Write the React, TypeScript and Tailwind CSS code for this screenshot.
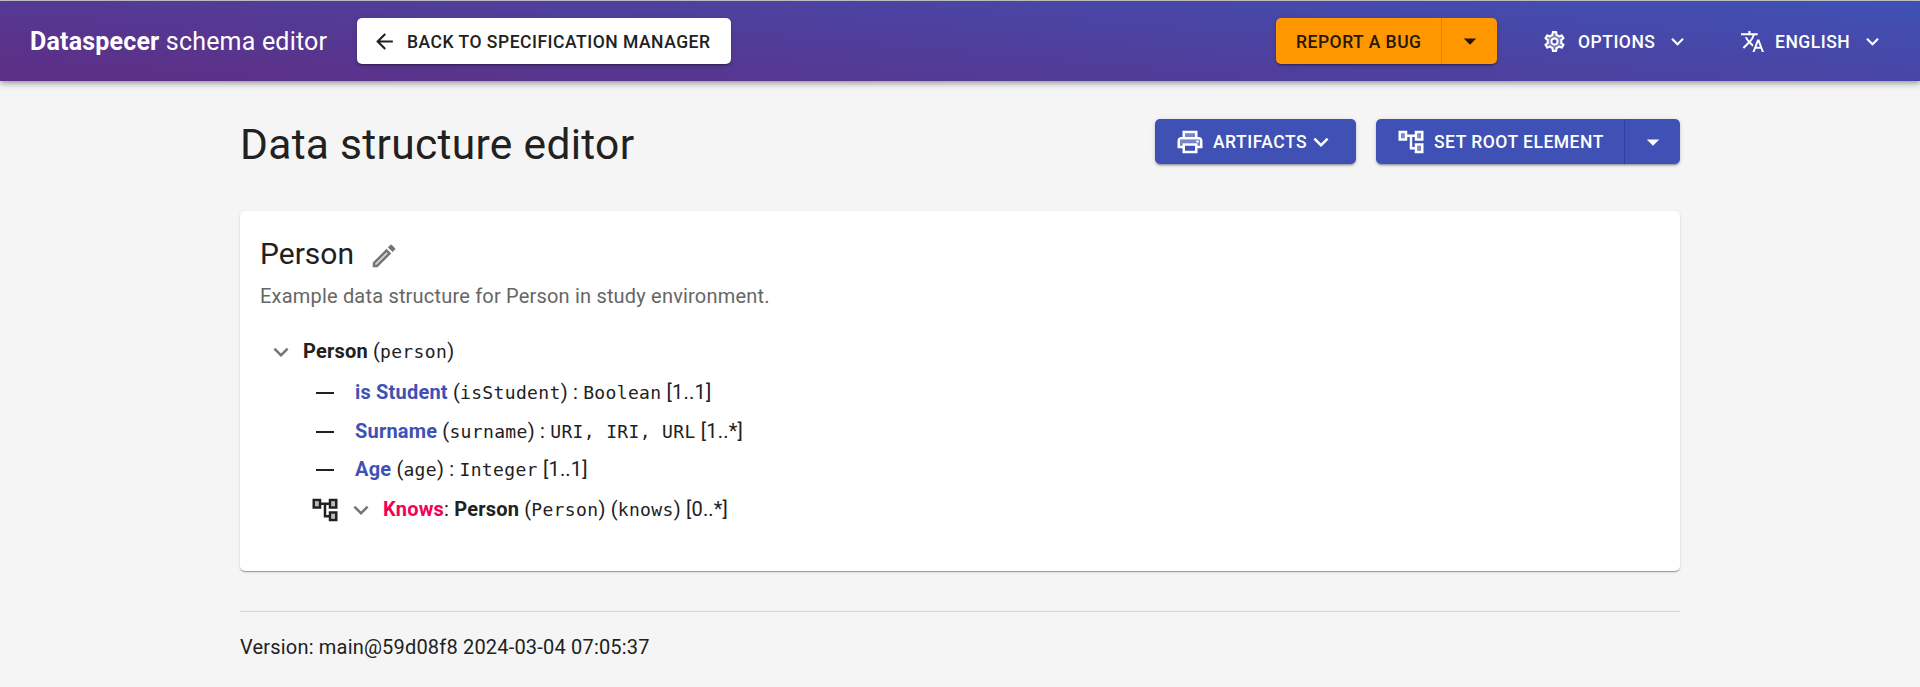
import type { ReactNode } from "react";
import { MdArrowBack, MdArrowDropDown, MdExpandMore, MdOutlineSettings, MdTranslate } from "react-icons/md";

const TREE_FILL = "M7 9H4V5h3v4zm10 6h3v4h-3v-4zm0-10h3v4h-3V5z";

function AccountTree({ className = "" }: { className?: string }) {
  return (
    <svg viewBox="0 0 24 24" fill="currentColor" className={`size-[30px] shrink-0 ${className}`}>
      <path opacity=".3" d={TREE_FILL} />
      <path d="M22 11V3h-7v3H9V3H2v8h7V8h2v10h4v3h7v-8h-7v3h-2V8h2v3h7zM7 9H4V5h3v4zm10 6h3v4h-3v-4zm0-10h3v4h-3V5z" />
    </svg>
  );
}

function Printer() {
  return (
    <svg viewBox="0 0 24 24" fill="currentColor" className="size-[30px] shrink-0">
      <path opacity=".3" d="M8 5h8v3H8zM19 10H5c-.55 0-1 .45-1 1v4h2v-2h12v2h2v-4c0-.55-.45-1-1-1z" />
      <path d="M19 8h-1V3H6v5H5c-1.66 0-3 1.34-3 3v6h4v4h12v-4h4v-6c0-1.66-1.34-3-3-3zM8 5h8v3H8V5zm8 14H8v-4h8v4zm2-4v-2H6v2H4v-4c0-.55.45-1 1-1h14c.55 0 1 .45 1 1v4h-2z" />
      <circle cx="18" cy="11.5" r="1" />
    </svg>
  );
}

function Pencil() {
  return (
    <svg viewBox="0 0 24 24" fill="currentColor" className="size-[30px] shrink-0">
      <path opacity=".3" d="M5 18.08V19h.92l9.06-9.06-.92-.92z" />
      <path d="M20.71 7.04c.39-.39.39-1.02 0-1.41l-2.34-2.34c-.2-.2-.45-.29-.71-.29s-.51.1-.7.29l-1.83 1.83 3.75 3.75 1.83-1.83zM3 17.25V21h3.75L17.81 9.94l-3.75-3.75L3 17.25zM5.92 19H5v-.92l9.06-9.06.92.92L5.92 19z" />
    </svg>
  );
}

function Gear() {
  return (
    <span className="grid size-[25px] shrink-0 place-items-center">
      <svg viewBox="0 0 24 24" fill="currentColor" className="col-start-1 row-start-1 size-[25px] opacity-30">
        <path d="M19.28 8.6l-.7-1.21-1.27.51-1.06.43-.91-.7c-.39-.3-.8-.54-1.23-.71l-1.06-.43-.16-1.13L12.7 4h-1.4l-.19 1.35-.16 1.13-1.06.44c-.41.17-.82.41-1.25.73l-.9.68-1.05-.42-1.27-.52-.7 1.21 1.08.84.89.7-.14 1.13c-.03.3-.05.53-.05.73s.02.43.05.73l.14 1.13-.89.7-1.08.84.7 1.21 1.27-.51 1.06-.43.91.7c.39.3.8.54 1.23.71l1.06.43.16 1.13.19 1.36h1.39l.19-1.35.16-1.13 1.06-.43c.41-.17.82-.41 1.25-.73l.9-.68 1.04.42 1.27.51.7-1.21-1.08-.84-.89-.7.14-1.13c.04-.31.05-.52.05-.73 0-.21-.02-.43-.05-.73l-.14-1.13.89-.7 1.1-.84zM12 16c-2.21 0-4-1.79-4-4s1.79-4 4-4 4 1.79 4 4-1.79 4-4 4z" />
      </svg>
      <MdOutlineSettings className="col-start-1 row-start-1 size-[25px]" />
    </span>
  );
}

function Mono({ children }: { children: ReactNode }) {
  return <span className="font-['DejaVu_Sans_Mono',monospace] text-[18px] tracking-[0.35px]">{children}</span>;
}

function Attribute({ label, name, type, range, className }: { label: string; name: string; type: string; range: string; className: string }) {
  return (
    <li className={`flex items-center ${className}`}>
      <span className="mr-[21px] h-0.5 w-[18px] bg-[#212121]" />
      <span className="pb-0.5">
        <b className="text-[#3f51b5]">{label}</b> (<Mono>{name}</Mono>) : <Mono>{type}</Mono> {range}
      </span>
    </li>
  );
}

const RAISED = "shadow-[0px_3px_1px_-2px_rgba(0,0,0,0.2),0px_2px_2px_0px_rgba(0,0,0,0.14),0px_1px_5px_0px_rgba(0,0,0,0.12)]";

export default function App() {
  return (
    <div className="h-[687px] overflow-hidden bg-[#f5f5f5] font-[Roboto,sans-serif] text-xl tracking-[0.19px] text-[#212121]">
      <div className="h-px bg-[#c8c8cc]" />
      <header className="flex h-20 items-center bg-[linear-gradient(5deg,#5d2f86_5%,#3f51b5_100%)] pl-[30px] text-white shadow-[0px_2px_4px_-1px_rgba(0,0,0,0.2),0px_4px_5px_0px_rgba(0,0,0,0.14),0px_1px_10px_0px_rgba(0,0,0,0.12)]">
        <h1 className="w-[327px] pt-px text-[25px] tracking-[0.19px] whitespace-nowrap">
          <b>Dataspecer</b> schema editor
        </h1>
        <button className={`flex h-[46px] w-[374px] items-center rounded-[5px] bg-white pl-[15px] text-[17.5px] font-medium tracking-[0.51px] whitespace-nowrap text-[#212121] ${RAISED}`}>
          <MdArrowBack className="mr-[10px] size-[25px]" />
          <span className="pt-0.5">BACK TO SPECIFICATION MANAGER</span>
        </button>
        <div className={`ml-auto flex h-[46px] w-[221px] rounded-[5px] bg-[#ff9800] text-[17.5px] font-medium tracking-[0.5px] text-[#261700] ${RAISED}`}>
          <button className="w-[166px] border-r border-[#f57c00] pt-0.5 pl-5 text-left">REPORT A BUG</button>
          <button className="flex flex-1 items-center justify-center">
            <MdArrowDropDown className="size-[30px]" />
          </button>
        </div>
        <button className="ml-[45px] flex w-[198px] items-center text-[17.5px] font-medium tracking-[0.5px]">
          <Gear />
          <span className="ml-[11px] w-[87px] pt-0.5 text-left">OPTIONS</span>
          <MdExpandMore className="size-[25px]" />
        </button>
        <button className="flex w-[180px] items-center text-[17.5px] font-medium tracking-[0.5px]">
          <MdTranslate className="size-[25px]" />
          <span className="ml-[10px] w-[85px] pt-0.5 text-left">ENGLISH</span>
          <MdExpandMore className="size-[25px]" />
        </button>
      </header>

      <main className="mx-auto w-[1440px]">
        <div className="flex h-[130px] pt-[38px]">
          <h2 className="mr-auto text-[42.5px] leading-[52px] tracking-[0.31px]">Data structure editor</h2>
          <button className={`flex h-[45px] w-[201px] items-center rounded-[5px] bg-[#3f51b5] pl-5 text-[17.5px] font-medium tracking-[0.5px] text-white ${RAISED}`}>
            <Printer />
            <span className="ml-2 pt-0.5">ARTIFACTS</span>
            <MdExpandMore className="-ml-px size-[30px]" />
          </button>
          <div className={`ml-5 flex h-[45px] w-[304px] rounded-[5px] bg-[#3f51b5] text-[17.5px] font-medium tracking-[0.5px] text-white ${RAISED}`}>
            <button className="flex w-[249px] items-center border-r border-[#303f9f] pl-5">
              <AccountTree />
              <span className="ml-2 pt-0.5">SET ROOT ELEMENT</span>
            </button>
            <button className="flex flex-1 items-center justify-center">
              <MdArrowDropDown className="size-[30px]" />
            </button>
          </div>
        </div>

        <section className="h-[360px] rounded-[5px] bg-white px-5 pt-[22px] shadow-[0px_2px_1px_-1px_rgba(0,0,0,0.2),0px_1px_1px_0px_rgba(0,0,0,0.14),0px_1px_3px_0px_rgba(0,0,0,0.12)]">
          <div className="flex h-[42px] items-center">
            <h3 className="text-[30px] tracking-normal">Person</h3>
            <span className="ml-[15px] pt-1 text-[#757575]">
              <Pencil />
            </span>
          </div>
          <p className="mt-[7px] leading-7 text-[#666666]">Example data structure for Person in study environment.</p>

          <ul className="mt-[27px] leading-[30px] whitespace-nowrap">
            <li className="flex h-[30px] items-center pl-[6px]">
              <MdExpandMore className="mr-[7px] size-[30px] text-[#757575]" />
              <span className="pb-0.5">
                <b>Person</b> (<Mono>person</Mono>)
              </span>
            </li>
            <li>
              <ul className="pl-14">
                <Attribute className="mt-[11px] h-[30px]" label="is Student" name="isStudent" type="Boolean" range="[1..1]" />
                <Attribute className="mt-[9px] h-[30px]" label="Surname" name="surname" type="URI, IRI, URL" range="[1..*]" />
                <Attribute className="mt-2 h-[30px]" label="Age" name="age" type="Integer" range="[1..1]" />
                <li className="mt-[10px] -ml-[6px] flex h-[30px] items-center">
                  <AccountTree />
                  <MdExpandMore className="mr-[7px] ml-[6px] size-[30px] text-[#757575]" />
                  <span className="pb-0.5">
                    <b className="text-[#f50057]">Knows</b>: <b>Person</b> (<Mono>Person</Mono>) (<Mono>knows</Mono>) [0..*]
                  </span>
                </li>
              </ul>
            </li>
          </ul>
        </section>

        <footer className="mt-10 border-t border-[#d5d5d5] pt-5 leading-[30px]">Version: main@59d08f8 2024-03-04 07:05:37</footer>
      </main>
    </div>
  );
}
